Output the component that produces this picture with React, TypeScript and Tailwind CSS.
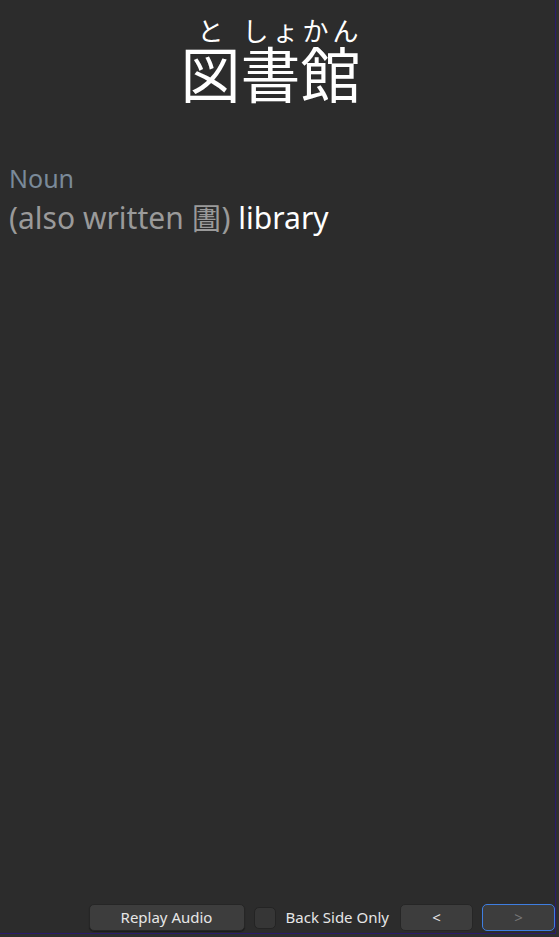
import React from 'react';

const App: React.FC = () => {
  return (
    <div className="w-[559px] h-[937px] bg-[#2f2f2f] overflow-hidden" style={{ fontFamily: '"Noto Sans", "Noto Sans CJK JP", sans-serif' }}>
      <div className="w-[556px] h-[934px] bg-[#2c2c2c] border-r border-b border-[#2a1a6e] flex flex-col">
        <div className="flex-1 pr-[14px]">
          <div className="flex justify-center pt-[18px]">
            <div className="text-white text-[60px] leading-[74px]" style={{ fontFamily: '"Noto Sans CJK JP", sans-serif' }}>
              <ruby>図<rt className="text-[26px] leading-[18px]">と</rt></ruby>
              <ruby>書<rt className="text-[26px] leading-[18px]">しょ</rt></ruby>
              <ruby>館<rt className="text-[26px] leading-[18px]">かん</rt></ruby>
            </div>
          </div>
          <div className="px-[9px] pt-[53px]">
            <div className="text-[#7a8a99] text-[25px] leading-[32px]">Noun</div>
            <div className="text-[30px] leading-[42px] pt-[3px]">
              <span className="text-[#9a9a9a]">(also written 圕)</span>{' '}
              <span className="text-white">library</span>
            </div>
          </div>
        </div>
        <div className="h-[30px] flex items-center justify-end gap-[9px] pb-[1px] text-[15px] text-[#e6e6e6]">
          <button className="w-[156px] h-[27px] rounded-[5px] bg-[#3d3d3d] border border-[#262626] shadow-[0_1px_1px_rgba(0,0,0,0.4)]">
            Replay Audio
          </button>
          <div className="flex items-center gap-[10px]">
            <span className="w-[22px] h-[22px] rounded-[5px] bg-[#363636] border border-[#242424] inline-block" />
            <span>Back Side Only</span>
          </div>
          <button className="w-[73px] h-[27px] ml-[2px] rounded-[5px] bg-[#3d3d3d] border border-[#262626]">&lt;</button>
          <button className="w-[73px] h-[27px] rounded-[5px] bg-[#3d3d3d] border border-[#3f7ee0] text-[#777777]">&gt;</button>
        </div>
      </div>
    </div>
  );
};

export default App;
